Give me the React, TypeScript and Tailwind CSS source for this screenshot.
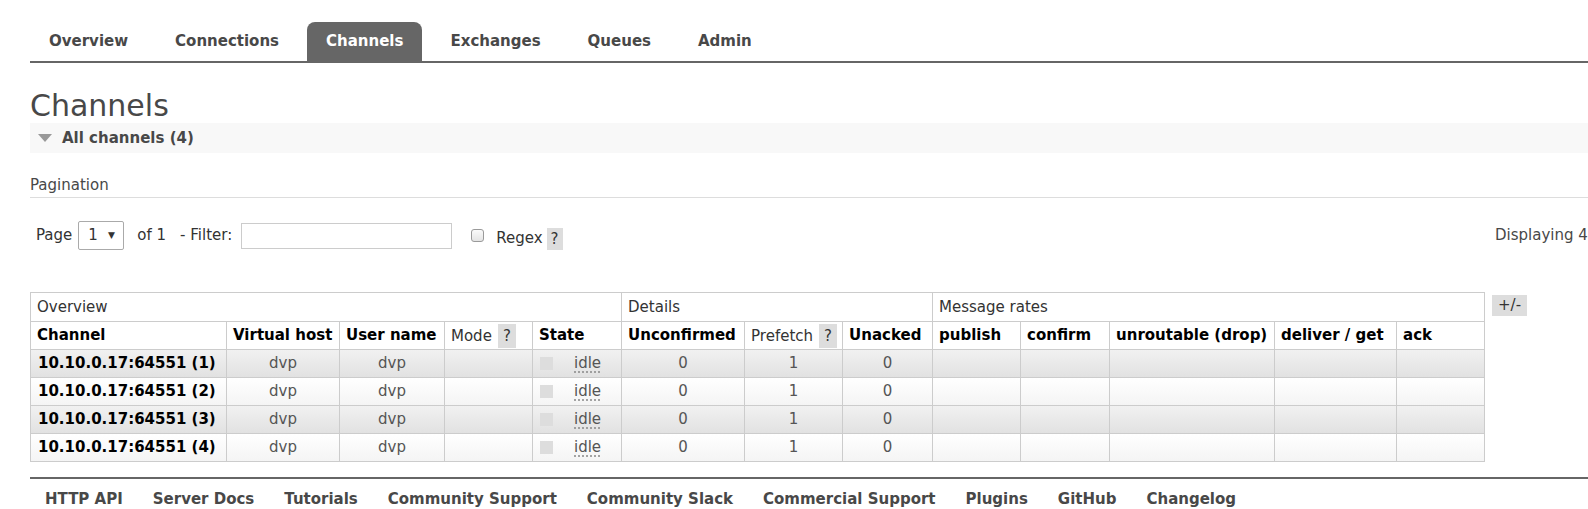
import React from 'react';

const tabs = ['Overview', 'Connections', 'Channels', 'Exchanges', 'Queues', 'Admin'];

const footerLinks = [
  'HTTP API',
  'Server Docs',
  'Tutorials',
  'Community Support',
  'Community Slack',
  'Commercial Support',
  'Plugins',
  'GitHub',
  'Changelog',
];

const colWidths = [196, 113, 105, 88, 89, 123, 98, 90, 88, 89, 165, 122, 88];

const channels = [1, 2, 3, 4].map((n) => ({
  name: `10.10.0.17:64551 (${n})`,
  vhost: 'dvp',
  user: 'dvp',
  unconfirmed: 0,
  prefetch: 1,
  unacked: 0,
}));

function Help() {
  return (
    <span className="inline-block bg-[#ddd] text-[#333] font-normal px-[5px] leading-[24px] ml-[6px]">?</span>
  );
}

const th = 'border border-[#ccc] text-left px-[6px] whitespace-nowrap overflow-hidden';

export default function App() {
  return (
    <div className="w-[1588px] h-[509px] overflow-hidden bg-white font-['DejaVu_Sans',sans-serif] text-[15px] text-[#333]">
      {/* top menu */}
      <div className="pl-[30px] pt-[22px]">
        <ul className="flex border-b-2 border-[#666]">
          {tabs.map((t) => (
            <li
              key={t}
              className={`px-[19px] mr-[9px] h-[39px] leading-[39px] rounded-t-[8px] font-bold ${
                t === 'Channels' ? 'bg-[#666] text-white' : 'text-[#484848]'
              }`}
            >
              {t}
            </li>
          ))}
        </ul>
      </div>

      <div className="pl-[30px]">
        <h1 className="mt-[26px] text-[30px] leading-[34px] text-[#484848]">Channels</h1>

        <div className="h-[30px] bg-[#f8f8f8] flex items-center">
          <svg width="14" height="8" viewBox="0 0 14 8" className="ml-[8px]">
            <polygon points="0,0 14,0 7,8" fill="#999" />
          </svg>
          <span className="ml-[10px] font-bold text-[#484848]">All channels (4)</span>
        </div>

        <div className="mt-[20px] h-[25px] leading-[24px] border-b border-[#ddd] text-[#484848]">Pagination</div>

        {/* pagination row */}
        <div className="mt-[23px] h-[29px] flex items-center whitespace-nowrap">
          <span className="ml-[6px]">Page</span>
          <div className="ml-[6px] w-[46px] h-[29px] border border-[#aaa] rounded-[2px] flex items-center">
            <span className="ml-[9px]">1</span>
            <span className="ml-[10px] text-[9px]">▼</span>
          </div>
          <span className="ml-[13px]">of 1</span>
          <span className="ml-[14px]">- Filter:</span>
          <div className="ml-[9px] w-[211px] h-[26px] border border-[#ccc] bg-white" />
          <div className="ml-[19px] w-[13px] h-[13px] border border-[#9a9a9a] rounded-[3px] bg-gradient-to-b from-[#fafafa] to-[#e4e4e4]" />
          <span className="ml-[12px] mt-[6px]">Regex</span>
          <span className="ml-[4px] mt-[6px] bg-[#ddd] px-[4px] leading-[22px]">?</span>
          <div className="flex-1" />
          <span className="w-[93px] shrink-0 overflow-hidden text-[#484848]">Displaying 4 items</span>
        </div>

        {/* table */}
        <div className="mt-[42px] flex items-start">
          <table className="table-fixed border-collapse border border-[#ccc] w-[1454px]">
            <colgroup>
              {colWidths.map((w, i) => (
                <col key={i} style={{ width: w }} />
              ))}
            </colgroup>
            <thead>
              <tr className="h-[29px]">
                <th colSpan={5} className={`${th} font-normal`}>Overview</th>
                <th colSpan={3} className={`${th} font-normal`}>Details</th>
                <th colSpan={5} className={`${th} font-normal`}>Message rates</th>
              </tr>
              <tr className="h-[28px] text-black">
                <th className={th}>Channel</th>
                <th className={th}>Virtual host</th>
                <th className={th}>User name</th>
                <th className={`${th} font-normal text-[#333]`}>
                  Mode<Help />
                </th>
                <th className={th}>State</th>
                <th className={th}>Unconfirmed</th>
                <th className={`${th} font-normal text-[#333]`}>
                  Prefetch<Help />
                </th>
                <th className={th}>Unacked</th>
                <th className={th}>publish</th>
                <th className={th}>confirm</th>
                <th className={th}>unroutable (drop)</th>
                <th className={th}>deliver / get</th>
                <th className={th}>ack</th>
              </tr>
            </thead>
            <tbody>
              {channels.map((c, i) => (
                <tr
                  key={c.name}
                  className={`h-[28px] ${
                    i % 2 === 0
                      ? 'bg-gradient-to-b from-[#f1f1f1] to-[#e1e1e1]'
                      : 'bg-gradient-to-b from-white to-[#f4f4f4]'
                  }`}
                >
                  <td className="border border-[#ccc] px-[7px] font-bold text-black whitespace-nowrap">{c.name}</td>
                  <td className="border border-[#ccc] text-center text-[#555]">{c.vhost}</td>
                  <td className="border border-[#ccc] text-center text-[#555]">{c.user}</td>
                  <td className="border border-[#ccc]" />
                  <td className="border border-[#ccc]">
                    <div className="flex items-center pl-[7px]">
                      <span className="w-[13px] h-[13px] bg-[#ddd]" />
                      <span className="ml-[21px] text-[#555] underline decoration-dotted decoration-[#888] underline-offset-[3px]">
                        idle
                      </span>
                    </div>
                  </td>
                  <td className="border border-[#ccc] text-center text-[#555]">{c.unconfirmed}</td>
                  <td className="border border-[#ccc] text-center text-[#555]">{c.prefetch}</td>
                  <td className="border border-[#ccc] text-center text-[#555]">{c.unacked}</td>
                  <td className="border border-[#ccc]" />
                  <td className="border border-[#ccc]" />
                  <td className="border border-[#ccc]" />
                  <td className="border border-[#ccc]" />
                  <td className="border border-[#ccc]" />
                </tr>
              ))}
            </tbody>
          </table>
          <span className="ml-[7px] mt-[3px] bg-[#ddd] px-[6px] leading-[21px]">+/-</span>
        </div>

        {/* footer */}
        <div className="mt-[15px] border-t-2 border-[#666] pt-[10px] flex whitespace-nowrap">
          {footerLinks.map((l) => (
            <span key={l} className="px-[15px] leading-[20px] font-bold text-[#484848]">
              {l}
            </span>
          ))}
        </div>
      </div>
    </div>
  );
}
